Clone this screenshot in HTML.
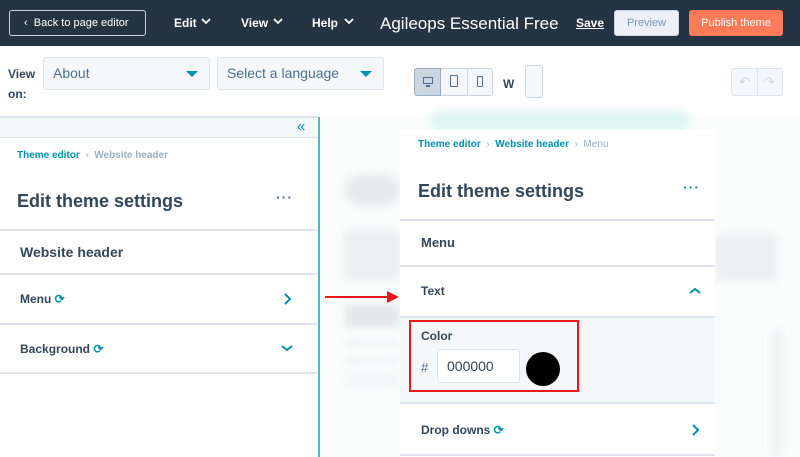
<!DOCTYPE html>
<html><head><meta charset="utf-8"><style>
*{box-sizing:border-box;margin:0;padding:0}
body{width:800px;height:457px;overflow:hidden;font-family:"Liberation Sans",sans-serif;background:#fff;position:relative;color:#33475b}
.a{position:absolute}
.top{left:0;top:0;width:800px;height:46px;background:#253342}
.b{font-weight:bold}
.dv{position:absolute;height:2px;background:#dfe3eb}
.chev{stroke:#0091ae;stroke-width:2;fill:none}
.wc{stroke:#fff;stroke-width:1.8;fill:none}
.blur{filter:blur(4px)}
</style></head><body>
<div class="a top"></div>
<div class="a" style="left:9px;top:10px;width:137px;height:26px;border:1px solid #cbd6e2;border-radius:3px;color:#fff;font-size:11px;line-height:24px;padding-left:14px">‹&nbsp;&nbsp;Back to page editor</div>
<div class="a b" style="left:174px;top:16px;color:#fff;font-size:12px">Edit</div>
<svg class="a" style="left:201px;top:18px" width="10" height="7"><path class="wc" d="M1 1l4 4 4-4"/></svg>
<div class="a b" style="left:241px;top:16px;color:#fff;font-size:12px">View</div>
<svg class="a" style="left:273px;top:18px" width="10" height="7"><path class="wc" d="M1 1l4 4 4-4"/></svg>
<div class="a b" style="left:312px;top:16px;color:#fff;font-size:12px">Help</div>
<svg class="a" style="left:344px;top:18px" width="10" height="7"><path class="wc" d="M1 1l4 4 4-4"/></svg>
<div class="a" style="left:380px;top:14px;color:#fff;font-size:17px">Agileops Essential Free</div>
<div class="a b" style="left:576px;top:16px;color:#fff;font-size:12px;text-decoration:underline">Save</div>
<div class="a" style="left:614px;top:10px;width:65px;height:26px;background:#eaf0f6;border:1px solid #cbd6e2;border-radius:3px;color:#7c98b6;font-size:11px;text-align:center;line-height:24px">Preview</div>
<div class="a" style="left:689px;top:10px;width:94px;height:26px;background:#ff7a59;border-radius:3px;color:#fff;font-size:11px;text-align:center;line-height:26px">Publish theme</div>

<div class="a b" style="left:8px;top:64px;font-size:12px;line-height:20px;color:#33475b">View<br>on:</div>
<div class="a" style="left:43px;top:57px;width:167px;height:33px;background:#f5f8fa;border:1px solid #dfe3eb;border-radius:3px;font-size:14px;line-height:31px;padding-left:9px;color:#516f90">About<span class="a" style="left:142px;top:13px;border:6px solid transparent;border-top:6px solid #0091ae;border-bottom:0"></span></div>
<div class="a" style="left:217px;top:57px;width:167px;height:33px;background:#f5f8fa;border:1px solid #dfe3eb;border-radius:3px;font-size:14px;line-height:31px;padding-left:9px;color:#516f90">Select a language<span class="a" style="left:142px;top:13px;border:6px solid transparent;border-top:6px solid #0091ae;border-bottom:0"></span></div>
<div class="a" style="left:414px;top:68px;width:79px;height:28px;border:1px solid #cbd6e2;border-radius:3px;background:#f5f8fa"></div>
<div class="a" style="left:414px;top:68px;width:27px;height:28px;background:#cbd6e2;border:1px solid #99afc4;border-radius:3px 0 0 3px"></div>
<div class="a" style="left:467px;top:69px;width:1px;height:26px;background:#cbd6e2"></div>
<div class="a" style="left:423px;top:77px;width:10px;height:7px;border:1.5px solid #516f90"></div>
<div class="a" style="left:426px;top:85px;width:4px;height:2px;background:#516f90"></div>
<div class="a" style="left:450px;top:75px;width:8px;height:12px;border:1.5px solid #516f90;border-radius:1px"></div>
<div class="a" style="left:477px;top:76px;width:6px;height:11px;border:1.5px solid #516f90;border-radius:1px"></div>
<div class="a b" style="left:503px;top:77px;font-size:12px">W</div>
<div class="a" style="left:525px;top:65px;width:18px;height:33px;border:1px solid #cbd6e2;border-radius:3px;background:#f5f8fa"></div>
<div class="a" style="left:731px;top:68px;width:52px;height:28px;border:1px solid #dfe3eb;border-radius:3px;background:#f5f8fa;color:#cbd6e2;font-size:13px;line-height:26px"><span style="margin-left:7px">↶</span><span style="margin-left:14px">↷</span></div>
<div class="a" style="left:757px;top:69px;width:1px;height:26px;background:#dfe3eb"></div>

<!-- preview bg -->
<div class="a" style="left:320px;top:117px;width:480px;height:340px;background:#fbfcfc"></div>
<div class="a blur" style="left:430px;top:110px;width:260px;height:22px;background:#dff6f2;border-radius:10px"></div>
<div class="a blur" style="left:345px;top:175px;width:55px;height:30px;background:#e6e8ea;border-radius:15px"></div>
<div class="a blur" style="left:345px;top:230px;width:55px;height:50px;background:#eceef0"></div>
<div class="a blur" style="left:345px;top:305px;width:55px;height:22px;background:#e4e6e8"></div>
<div class="a blur" style="left:345px;top:340px;width:55px;height:5px;background:#eef0f2"></div>
<div class="a blur" style="left:345px;top:358px;width:55px;height:5px;background:#eef0f2"></div>
<div class="a blur" style="left:345px;top:378px;width:55px;height:5px;background:#eef0f2"></div>
<div class="a blur" style="left:715px;top:235px;width:62px;height:45px;background:#eceef0"></div>
<div class="a blur" style="left:772px;top:330px;width:10px;height:127px;background:#f0f2f4"></div>

<!-- left panel -->
<div class="a" style="left:0;top:116px;width:318px;height:2px;background:#dfe3eb"></div>
<div class="a" style="left:0;top:118px;width:317px;height:20px;background:#f5f8fa;border-bottom:1px solid #dfe3eb"></div>
<div class="a" style="left:297px;top:118px;color:#0091ae;font-size:15px">«</div>
<div class="a" style="left:318px;top:117px;width:2px;height:340px;background:#51b8bd"></div>
<div class="a b" style="left:17px;top:150px;font-size:10px;color:#0091ae">Theme editor <span style="color:#99afc4;font-weight:normal">&nbsp;›&nbsp;</span> <span style="color:#99afc4">Website header</span></div>
<div class="a b" style="left:17px;top:191px;font-size:18px">Edit theme settings</div>
<div class="a b" style="left:276px;top:189px;font-size:14px;color:#516f90;letter-spacing:1px">···</div>
<div class="dv" style="left:0;top:229px;width:317px"></div>
<div class="a b" style="left:20px;top:244px;font-size:14px">Website header</div>
<div class="dv" style="left:0;top:273px;width:317px"></div>
<div class="a b" style="left:20px;top:292px;font-size:12px">Menu <span style="color:#0091ae">⟳</span></div>
<svg class="a" style="left:282px;top:293px" width="10" height="12"><path class="chev" d="M3 1l5 5-5 5"/></svg>
<div class="dv" style="left:0;top:323px;width:317px"></div>
<div class="a b" style="left:20px;top:342px;font-size:12px">Background <span style="color:#0091ae">⟳</span></div>
<svg class="a" style="left:281px;top:344px" width="12" height="8"><path class="chev" d="M1 2l5 4 5-4"/></svg>
<div class="dv" style="left:0;top:372px;width:317px"></div>

<!-- arrow -->
<div class="a" style="left:325px;top:296px;width:63px;height:2px;background:#e8191a"></div>
<div class="a" style="left:387px;top:291px;border-left:12px solid #e8191a;border-top:6px solid transparent;border-bottom:6px solid transparent"></div>

<!-- right panel -->
<div class="a" style="left:400px;top:130px;width:315px;height:327px;background:#fff"></div>
<div class="a b" style="left:418px;top:139px;font-size:10px;color:#0091ae">Theme editor <span style="color:#99afc4;font-weight:normal">&nbsp;›&nbsp;</span> Website header <span style="color:#99afc4;font-weight:normal">&nbsp;›&nbsp; Menu</span></div>
<div class="a b" style="left:418px;top:181px;font-size:18px">Edit theme settings</div>
<div class="a b" style="left:683px;top:179px;font-size:14px;color:#0091ae;letter-spacing:1px">···</div>
<div class="dv" style="left:400px;top:219px;width:315px"></div>
<div class="a b" style="left:421px;top:235px;font-size:13px">Menu</div>
<div class="dv" style="left:400px;top:265px;width:315px"></div>
<div class="a b" style="left:421px;top:284px;font-size:12px">Text</div>
<svg class="a" style="left:689px;top:287px" width="12" height="8"><path class="chev" d="M1 6l5-4 5 4"/></svg>
<div class="a" style="left:400px;top:316px;width:315px;height:88px;background:#f5f8fa;border-top:2px solid #dfe3eb;border-bottom:2px solid #dfe3eb"></div>
<div class="a" style="left:409px;top:320px;width:170px;height:72px;border:2px solid #e8191a"></div>
<div class="a b" style="left:421px;top:329px;font-size:12px">Color</div>
<div class="a" style="left:421px;top:360px;font-size:13px;color:#516f90">#</div>
<div class="a" style="left:437px;top:349px;width:83px;height:34px;background:#fff;border:1px solid #dfe3eb;border-radius:3px;font-size:14px;line-height:32px;padding-left:9px;color:#33475b">000000</div>
<div class="a" style="left:526px;top:352px;width:34px;height:34px;border-radius:50%;background:#000"></div>
<div class="a b" style="left:421px;top:423px;font-size:12px">Drop downs <span style="color:#0091ae">⟳</span></div>
<svg class="a" style="left:690px;top:424px" width="10" height="12"><path class="chev" d="M3 1l5 5-5 5"/></svg>
<div class="dv" style="left:400px;top:454px;width:315px"></div>
</body></html>
